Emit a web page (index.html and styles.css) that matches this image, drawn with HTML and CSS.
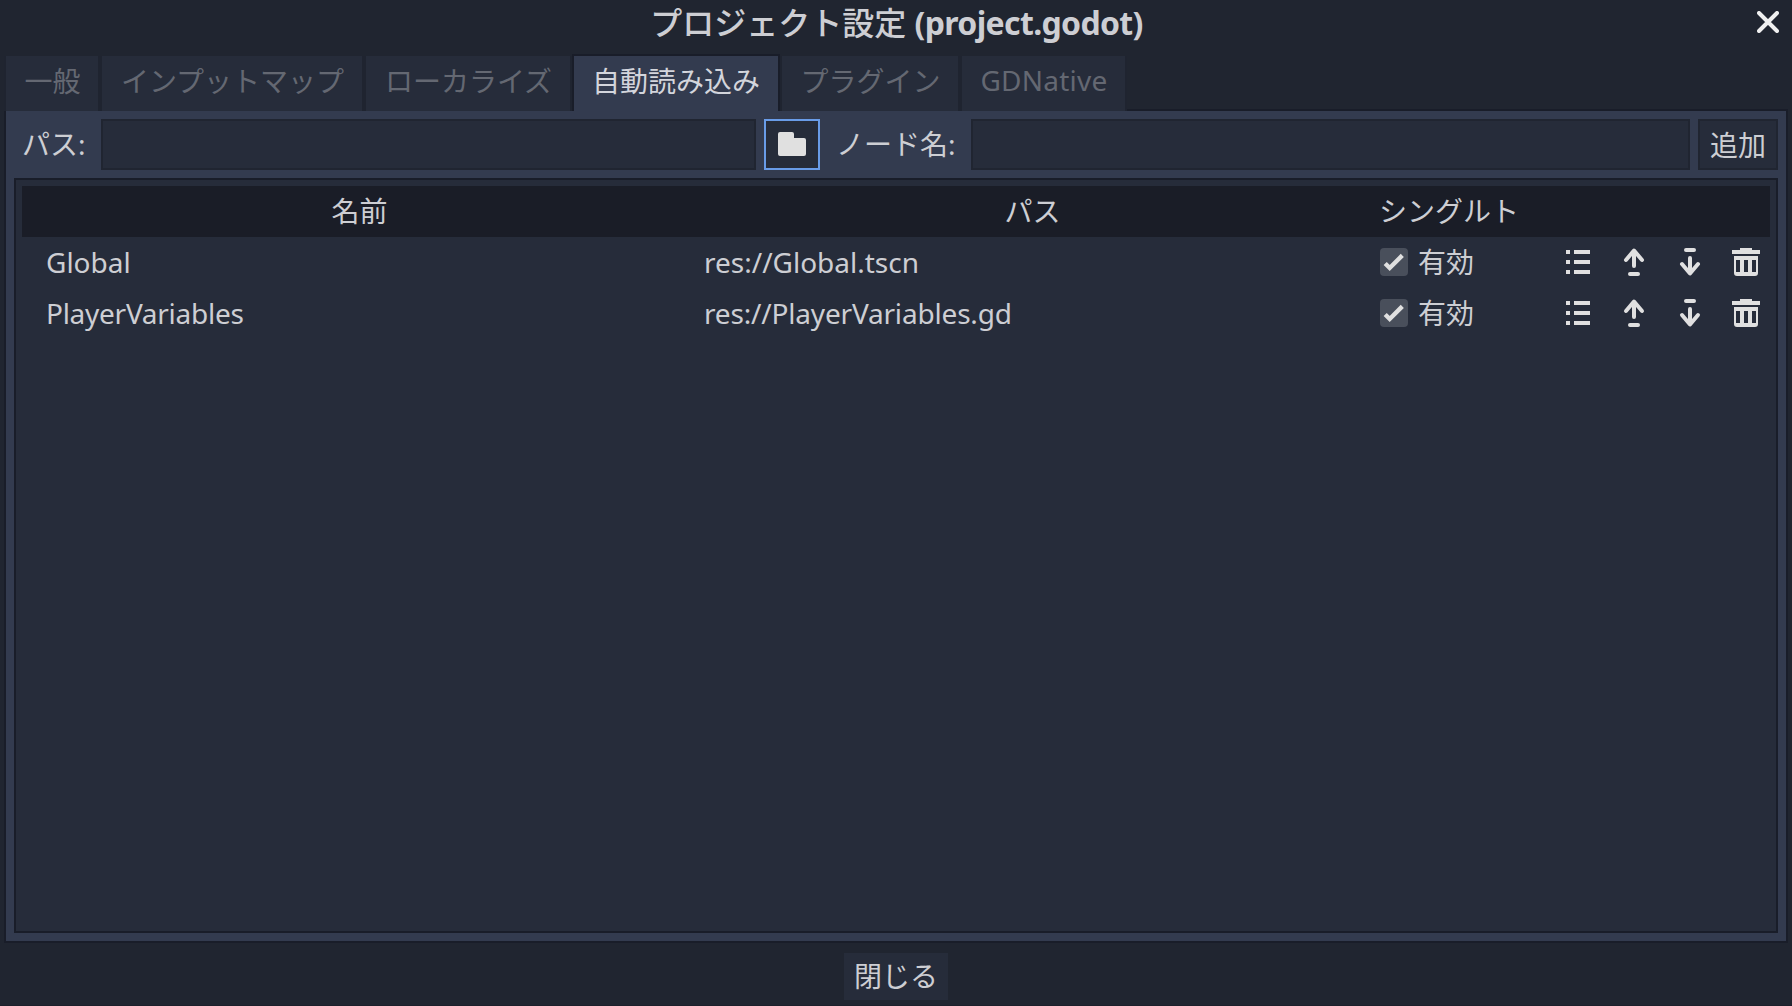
FILE: index.html
```html
<!DOCTYPE html>
<html lang="ja">
<head>
<meta charset="utf-8">
<title>プロジェクト設定</title>
<link rel="stylesheet" href="styles.css">
</head>
<body>
<svg class="defs" width="0" height="0">
  <symbol id="list" viewBox="0 0 32 32"><path d="M4 4h4v4H4zM12 4h16v4H12zM4 14h4v4H4zM12 14h16v4H12zM4 24h4v4H4zM12 24h16v4H12z" fill="currentColor"/></symbol>
  <symbol id="up" viewBox="0 0 32 32"><path d="M8 14L16 4.5L24 14M16 6V20M12 28H20" fill="none" stroke="currentColor" stroke-width="4" stroke-linecap="round" stroke-linejoin="round"/></symbol>
  <symbol id="down" viewBox="0 0 32 32"><path d="M8 18L16 27.5L24 18M16 26V12M12 4H20" fill="none" stroke="currentColor" stroke-width="4" stroke-linecap="round" stroke-linejoin="round"/></symbol>
  <symbol id="trash" viewBox="0 0 32 32"><path fill-rule="evenodd" d="M10 2H22V4H30V8H2V4H10zM4 10H28V27Q28 30 25 30H7Q4 30 4 27zM6 14V26H10V14zM14 14V26H18V14zM22 14V26H26V14z" fill="currentColor"/></symbol>
  <symbol id="check" viewBox="0 0 28 28"><rect width="28" height="28" rx="4" fill="#494f5b"/><path d="M5.2 15.5L9.7 20L22.3 7.4" fill="none" stroke="currentColor" stroke-width="4.4"/></symbol>
</svg>
<div class="window">
  <header class="titlebar">
    <h1 class="title"><span class="title-ja">プロジェクト設定</span> <b class="title-file">(project.godot)</b></h1>
    <svg class="close" viewBox="0 0 22 22"><path d="M2 2L20 20M20 2L2 20" stroke="currentColor" stroke-width="4" stroke-linecap="round"/></svg>
  </header>
  <nav class="tabs">
    <div class="tab general">一般</div>
    <div class="tab input-map">インプットマップ</div>
    <div class="tab localize">ローカライズ</div>
    <div class="tab autoload active">自動読み込み</div>
    <div class="tab plugins">プラグイン</div>
    <div class="tab native">GDNative</div>
  </nav>
  <main class="panel">
    <div class="form">
      <label class="label path-label">パス:</label>
      <div class="field path-field"></div>
      <div class="field browse"><svg width="28" height="24" viewBox="0 0 28 24"><path d="M2 0H14Q16 0 16 2V6H26Q28 6 28 8V22Q28 24 26 24H2Q0 24 0 22V2Q0 0 2 0z" fill="currentColor"/></svg></div>
      <label class="label node-label">ノード名:</label>
      <div class="field node-field"></div>
      <div class="field add">追加</div>
    </div>
    <section class="tree">
      <div class="row head"><span>名前</span><span>パス</span><span class="single">シングルト</span></div>
      <div class="row">
        <span class="name">Global</span><span class="path">res://Global.tscn</span>
        <span class="enable"><svg class="box"><use href="#check"/></svg>有効</span>
        <span class="actions"><svg><use href="#list"/></svg><svg><use href="#up"/></svg><svg><use href="#down"/></svg><svg><use href="#trash"/></svg></span>
      </div>
      <div class="row">
        <span class="name tight">PlayerVariables</span><span class="path tight-path">res://PlayerVariables.gd</span>
        <span class="enable"><svg class="box"><use href="#check"/></svg>有効</span>
        <span class="actions"><svg><use href="#list"/></svg><svg><use href="#up"/></svg><svg><use href="#down"/></svg><svg><use href="#trash"/></svg></span>
      </div>
    </section>
  </main>
  <footer class="footer"><div class="dismiss">閉じる</div></footer>
</div>
</body>
</html>
```
FILE: styles.css
```css
* { box-sizing: border-box; }
body {
  margin: 0;
  background: #202530;
  color: #cdced3;
  font: 28px/38px "Noto Sans", "Noto Sans CJK JP", sans-serif;
  overflow: hidden;
}
.defs { display: none; }
svg { flex: none; color: #e0e0e0; }
.window {
  width: 1792px;
  height: 1006px;
  padding: 0 4px;
  display: flex;
  flex-direction: column;
  border-bottom: 1px solid #1c202b;
}
.titlebar {
  height: 54px;
  display: grid;
  grid-template-columns: 1fr auto;
  padding-right: 9px;
}
.title {
  margin: 0;
  padding-left: 32px;
  font-size: 32px;
  line-height: 46px;
  font-weight: 400;
  text-align: center;
  white-space: nowrap;
}
.title-ja { font-weight: 500; }
.title-file { font-weight: 700; letter-spacing: -0.65px; }
.close { width: 22px; height: 22px; margin-top: 11px; color: #f0f0f0; }
.tabs { display: flex; align-items: flex-end; height: 57px; margin-bottom: -2px; position: relative; }
.tab {
  height: 55px;
  padding: 6px 0 0 1px;
  border: solid #1f2430;
  border-width: 0 2px;
  background: #262c3a;
  color: #646872;
  text-align: center;
  white-space: nowrap;
}
.tab.active {
  height: 57px;
  padding-left: 0;
  border-color: #191d29;
  border-top-width: 2px;
  background: #333b4f;
  color: #d3d5dc;
}
.general { width: 96px; }
.input-map { width: 264px; }
.localize { width: 208px; }
.autoload { width: 208px; }
.plugins { width: 180px; }
.tab.native { width: 167px; padding-top: 5px; letter-spacing: 0.25px; }
.panel {
  height: 834px;
  padding: 8px;
  border: 2px solid #191d29;
  background: #333b4f;
  display: flex;
  flex-direction: column;
  gap: 8px;
}
.form { display: flex; height: 51px; }
.label { padding-top: 6px; white-space: nowrap; }
.path-label { width: 87px; padding-left: 8px; }
.node-label { width: 151px; padding-left: 16px; }
.field { border: 2px solid #202531; background: #262c3a; }
.path-field { width: 655px; }
.browse {
  width: 56px;
  margin-left: 8px;
  border-color: #699ce8;
  display: flex;
  align-items: center;
  justify-content: center;
  padding-bottom: 1px;
}
.node-field { flex: 1; margin-right: 8px; }
.add { width: 80px; padding-top: 5px; text-align: center; }
.tree { flex: 1; border: 2px solid #191d29; background: #262c3a; padding: 6px; }
.row {
  display: grid;
  grid-template-columns: 674px 672px 172px 1fr;
  height: 51px;
  line-height: 51px;
  white-space: nowrap;
}
.head { background: #1a1d27; text-align: center; }
.head span { padding-left: 1px; }
.head .single { text-align: left; padding-left: 11px; }
.name { padding-left: 24px; }
.path { padding-left: 8px; }
.tight { letter-spacing: -0.27px; }
.tight-path { letter-spacing: -0.18px; }
.enable { display: flex; align-items: center; padding-left: 12px; gap: 10px; }
.box { width: 28px; height: 28px; margin-bottom: 2px; }
.actions { display: flex; align-items: center; gap: 24px; padding: 0 0 2px 22px; }
.actions svg { width: 32px; height: 32px; }
.footer { display: flex; justify-content: center; padding-top: 10px; }
.dismiss { width: 104px; height: 47px; padding-top: 4px; background: #262c3a; text-align: center; }
```
